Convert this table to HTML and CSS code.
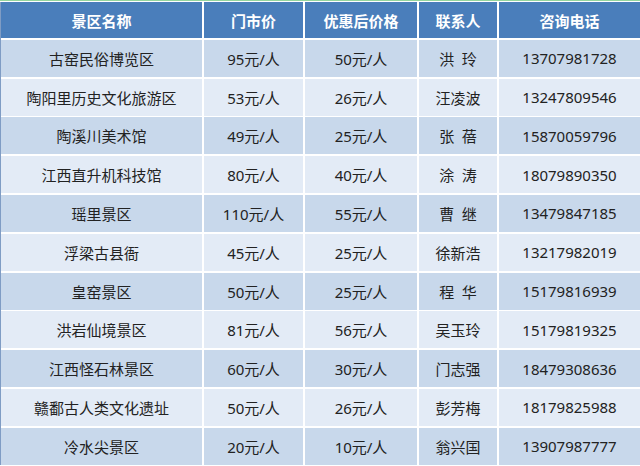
FILE: index.html
```html
<!DOCTYPE html>
<html lang="zh-CN">
<head>
<meta charset="utf-8">
<title>景区门票</title>
<link rel="stylesheet" href="styles.css">
</head>
<body>
<div class="page">
  <div class="topline"></div>
  <div class="table">
    <div class="cell head">景区名称</div>
    <div class="cell head">门市价</div>
    <div class="cell head">优惠后价格</div>
    <div class="cell head">联系人</div>
    <div class="cell head">咨询电话</div>

    <div class="cell odd">古窑民俗博览区</div>
    <div class="cell odd">95元/人</div>
    <div class="cell odd">50元/人</div>
    <div class="cell odd">洪&ensp;玲</div>
    <div class="cell odd">13707981728</div>

    <div class="cell even">陶阳里历史文化旅游区</div>
    <div class="cell even">53元/人</div>
    <div class="cell even">26元/人</div>
    <div class="cell even">汪凌波</div>
    <div class="cell even">13247809546</div>

    <div class="cell odd">陶溪川美术馆</div>
    <div class="cell odd">49元/人</div>
    <div class="cell odd">25元/人</div>
    <div class="cell odd">张&ensp;蓓</div>
    <div class="cell odd">15870059796</div>

    <div class="cell even">江西直升机科技馆</div>
    <div class="cell even">80元/人</div>
    <div class="cell even">40元/人</div>
    <div class="cell even">涂&ensp;涛</div>
    <div class="cell even">18079890350</div>

    <div class="cell odd">瑶里景区</div>
    <div class="cell odd">110元/人</div>
    <div class="cell odd">55元/人</div>
    <div class="cell odd">曹&ensp;继</div>
    <div class="cell odd">13479847185</div>

    <div class="cell even">浮梁古县衙</div>
    <div class="cell even">45元/人</div>
    <div class="cell even">25元/人</div>
    <div class="cell even">徐新浩</div>
    <div class="cell even">13217982019</div>

    <div class="cell odd">皇窑景区</div>
    <div class="cell odd">50元/人</div>
    <div class="cell odd">25元/人</div>
    <div class="cell odd">程&ensp;华</div>
    <div class="cell odd">15179816939</div>

    <div class="cell even">洪岩仙境景区</div>
    <div class="cell even">81元/人</div>
    <div class="cell even">56元/人</div>
    <div class="cell even">吴玉玲</div>
    <div class="cell even">15179819325</div>

    <div class="cell odd">江西怪石林景区</div>
    <div class="cell odd">60元/人</div>
    <div class="cell odd">30元/人</div>
    <div class="cell odd">门志强</div>
    <div class="cell odd">18479308636</div>

    <div class="cell even">赣鄱古人类文化遗址</div>
    <div class="cell even">50元/人</div>
    <div class="cell even">26元/人</div>
    <div class="cell even">彭芳梅</div>
    <div class="cell even">18179825988</div>

    <div class="cell odd">冷水尖景区</div>
    <div class="cell odd">20元/人</div>
    <div class="cell odd">10元/人</div>
    <div class="cell odd">翁兴国</div>
    <div class="cell odd">13907987777</div>
  </div>
</div>
</body>
</html>
```
FILE: styles.css
```css
html, body {
  margin: 0;
  padding: 0;
  background: #ffffff;
}

.page {
  width: 640px;
  height: 466px;
  overflow: hidden;
  background: #ffffff;
  font-family: "Noto Sans", "Noto Sans CJK SC", sans-serif;
}

.topline {
  height: 1px;
  background: #95d59e;
  margin-bottom: 1px;
}

.table {
  display: grid;
  grid-template-columns: 201px 99px 112px 78px 141px;
  grid-template-rows: 36px repeat(11, 37px);
  column-gap: 2px;
  row-gap: 1.8px;
  background: #ffffff;
  border-left: 1px solid #7f9cc4;
}

.cell {
  display: flex;
  align-items: center;
  justify-content: center;
  font-size: 15px;
  color: #222222;
  white-space: nowrap;
}

.head {
  background: #4a7ebb;
  color: #ffffff;
  font-weight: 700;
}

.odd {
  background: #c8d8eb;
}

.even {
  background: #e3ebf6;
}
```
